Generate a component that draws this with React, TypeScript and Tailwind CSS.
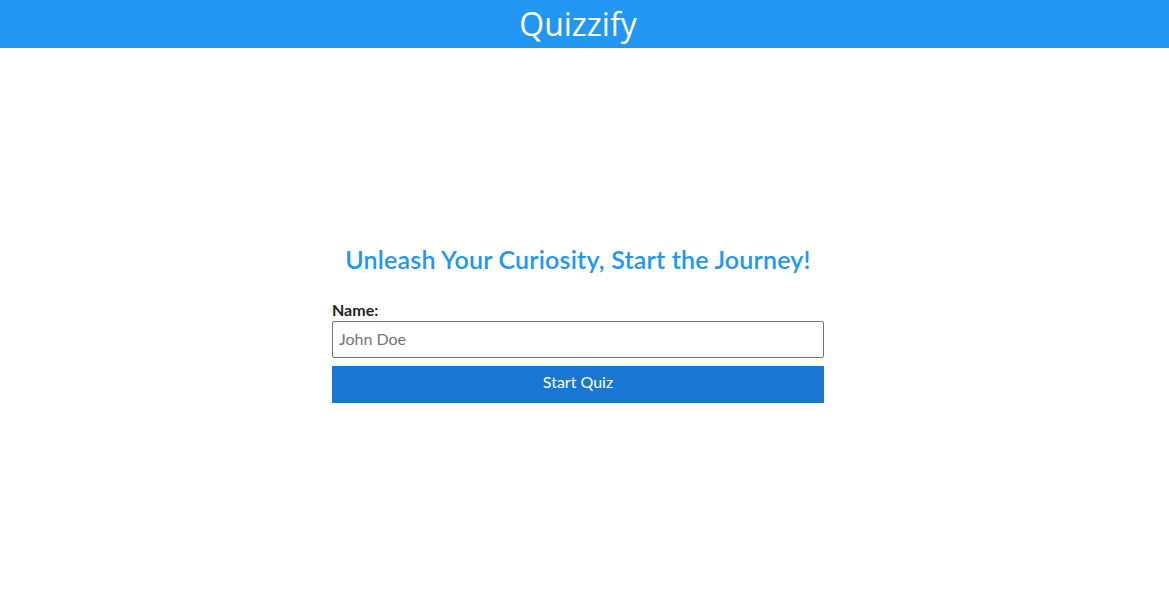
import React from "react";

export default function App() {
  return (
    <div className="min-h-[614px] w-full bg-white" style={{ fontFamily: "Lato, 'Noto Sans', sans-serif" }}>
      <header className="h-12 w-full bg-[#2196f3] flex items-center justify-center pr-[13px]">
        <h1 className="text-[32px] leading-none text-white" style={{ fontFamily: "'Open Sans', 'Noto Sans', sans-serif" }}>Quizzify</h1>
      </header>
      <main className="flex justify-center pr-[13px] pt-[196px]">
        <div className="w-[492px] flex flex-col">
          <h2 className="text-center text-[25px] font-semibold text-[#2196f3] leading-[30px] tracking-[0.2px]">
            Unleash Your Curiosity, Start the Journey!
          </h2>
          <label className="mt-[26px] text-[16px] font-bold text-[#222] leading-5">Name:</label>
          <input
            className="mt-[1px] h-[37px] w-full rounded-[2px] border border-[#767676] px-[6px] pb-[3px] text-[16px] placeholder:text-[#757575] outline-none"
            placeholder="John Doe"
          />
          <button className="mt-[8px] h-[37px] w-full bg-[#1976d2] pb-[5px] text-white text-[16px]">Start Quiz</button>
        </div>
      </main>
    </div>
  );
}
